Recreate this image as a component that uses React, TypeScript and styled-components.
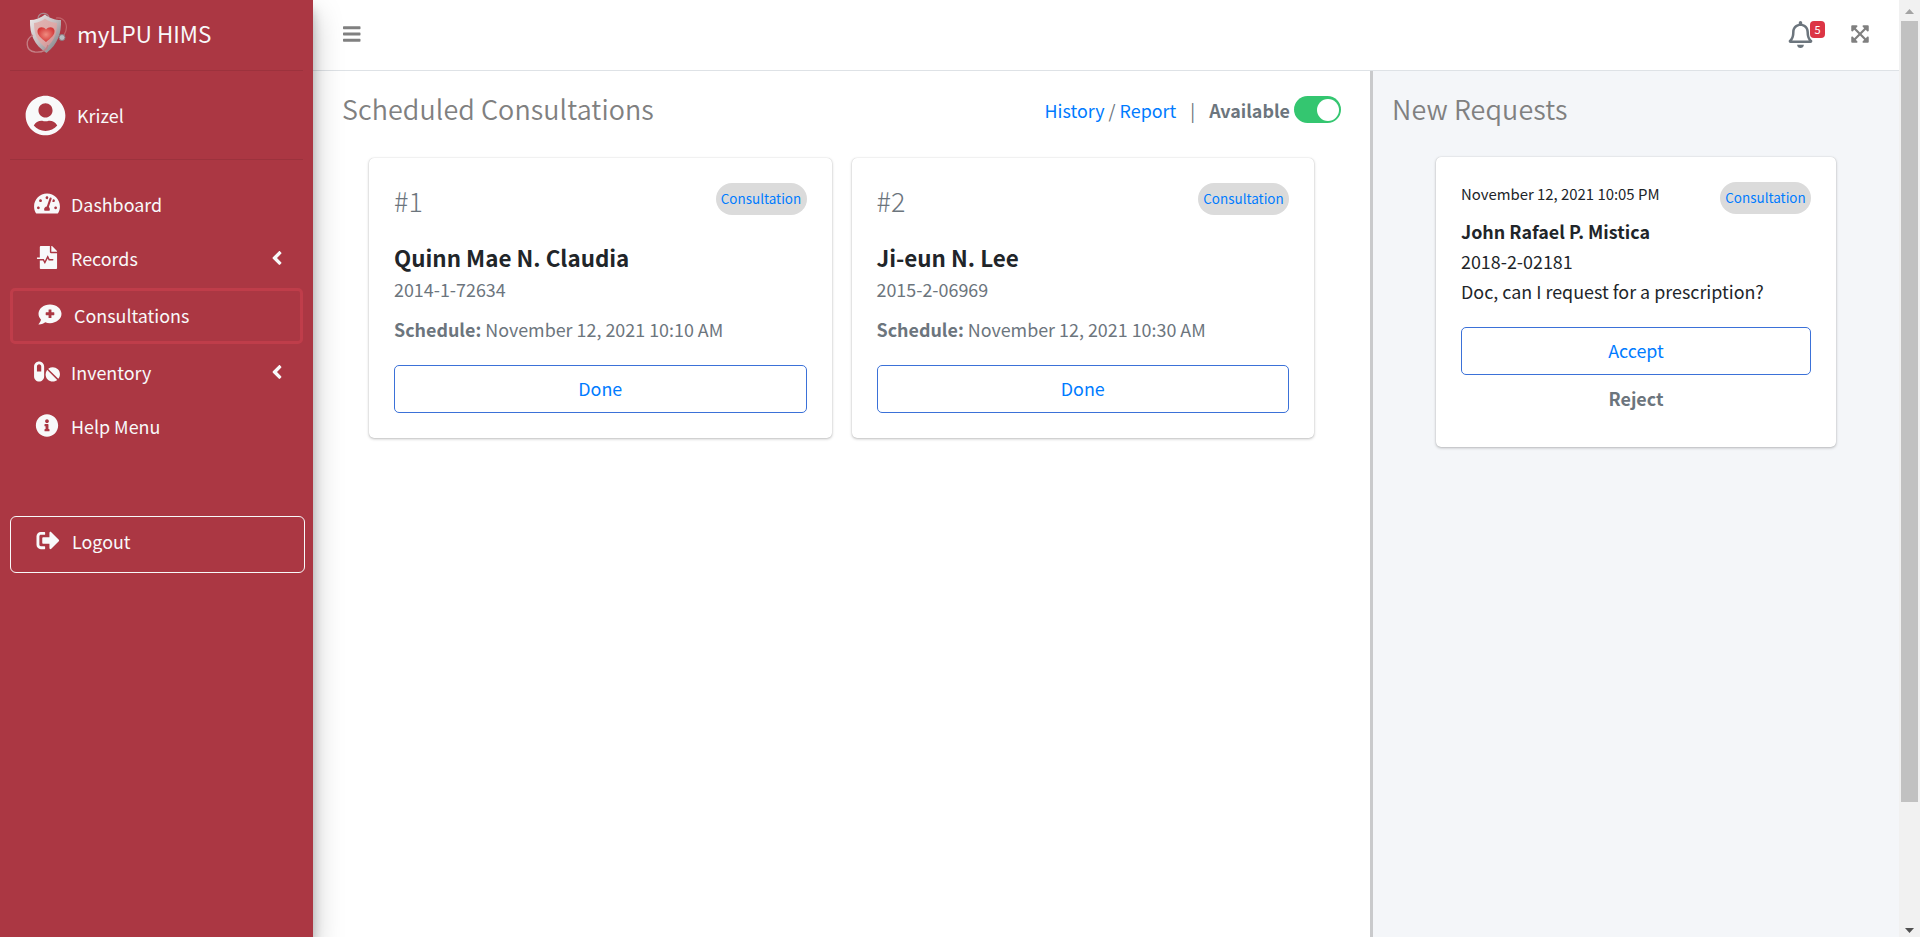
import React from "react";
import styled, { createGlobalStyle, css } from "styled-components";
import type { IconType } from "react-icons";
import {
  FaAngleLeft,
  FaBars,
  FaCommentMedical,
  FaExpandArrowsAlt,
  FaFileMedicalAlt,
  FaInfoCircle,
  FaPills,
  FaRegBell,
  FaSignOutAlt,
  FaTachometerAlt,
  FaUserCircle,
} from "react-icons/fa";

const GlobalStyle = createGlobalStyle`
  *, *::before, *::after { box-sizing: border-box; }
  body {
    margin: 0;
    overflow: hidden;
    background: #fff;
    color: #212529;
    font-family: "Noto Sans CJK SC", "Noto Sans", sans-serif;
    font-size: 17.9px;
    line-height: 30px;
  }
  h1, h2, h3, p { margin: 0; font-weight: 400; }
  a { color: #007bff; text-decoration: none; }
`;

const Page = styled.div`
  display: flex;
  width: 1920px;
  height: 937px;
`;

/* ---------- sidebar ---------- */

const Sidebar = styled.aside`
  position: relative;
  z-index: 2;
  flex: 0 0 313px;
  min-width: 0;
  padding: 0 10px;
  background: #ab3743;
  color: #f8f9fa;
  box-shadow: 0 14px 28px rgba(0, 0, 0, 0.25), 0 10px 10px rgba(0, 0, 0, 0.22);
`;

const Brand = styled.div`
  display: flex;
  align-items: center;
  height: 71px;
  padding: 0 0 4px 15px;
  border-bottom: 1px solid #9c323d;
  font-size: 22.4px;
`;

const Logo = styled.svg`
  width: 43px;
  height: 43px;
  margin: 1px 9px 0 0;
`;

const UserPanel = styled.div`
  display: flex;
  align-items: center;
  height: 89px;
  padding: 0 0 0 15px;
  border-bottom: 1px solid #9c323d;

  svg { font-size: 41px; margin-right: 11px; }
`;

const Nav = styled.nav`
  display: flex;
  flex-direction: column;
  padding-top: 18px;
`;

const NavLink = styled.div<{ $variant?: "active" | "logout" }>`
  display: flex;
  align-items: center;
  height: 54px;
  padding: 0 21px 2px;

  ${(p) =>
    p.$variant === "active" &&
    css`
      height: 56px;
      width: 293px;
      margin: 2px 0;
      border: 3px solid #bf3d4a;
      border-radius: 5px;
    `}
  ${(p) =>
    p.$variant === "logout" &&
    css`
      height: 57px;
      width: 295px;
      margin-top: 62px;
      padding-bottom: 8px;
      border: 1px solid #f8f9fa;
      border-radius: 6px;
    `}
`;

const NavIcon = styled.span`
  display: flex;
  justify-content: center;
  width: 32px;
  margin-right: 8px;
  padding-bottom: 1px;
  font-size: 23px;

  svg { width: 26px; height: 23px; }
`;

const NavArrow = styled(FaAngleLeft)`
  margin: 0 -6px 0 auto;
  font-size: 22px;
`;

/* ---------- top bar ---------- */

const Content = styled.div`
  display: flex;
  flex-direction: column;
  flex: 0 0 1586px;
`;

const TopBar = styled.header`
  display: flex;
  align-items: center;
  flex: 0 0 71px;
  padding: 0 29px 2px 30px;
  border-bottom: 1px solid #dee2e6;
  color: #808080;
`;

const MenuIcon = styled(FaBars)`
  width: 17.5px;
  height: 20px;
  margin-right: auto;
`;

const Bell = styled.span`
  position: relative;
  display: flex;
  margin-right: 36px;
  color: #6c757d;
  font-size: 27px;
`;

const BellCount = styled.span`
  position: absolute;
  top: 0;
  left: 23px;
  width: 15px;
  height: 17px;
  border-radius: 4px;
  background: #dc3545;
  color: #fff;
  font-size: 11px;
  line-height: 17px;
  text-align: center;
`;

const ExpandIcon = styled(FaExpandArrowsAlt)`
  font-size: 20px;
`;

/* ---------- panels ---------- */

const Panels = styled.div`
  display: flex;
  flex: 1;
`;

const Scheduled = styled.main`
  flex: 0 0 1057px;
  padding: 20px 29px;
`;

const Requests = styled.section`
  flex: 1;
  padding: 20px 20px 20px 19px;
  border-left: 3px solid #c9cacc;
  background: #f4f6f9;
`;

const PanelHead = styled.div`
  display: flex;
  align-items: center;
  justify-content: space-between;
  height: 38px;
`;

const PanelTitle = styled.h1`
  color: #808080;
  font-size: 26.9px;
  font-weight: 350;
  letter-spacing: 0.1px;
  line-height: 36px;
  margin-bottom: 2px;
`;

const PanelTools = styled.div`
  display: flex;
  align-items: center;
  color: #6c757d;
`;

const Slash = styled.span`
  margin: 0 4px;
`;

const Pipe = styled.span`
  margin: 0 14px;
`;

const Toggle = styled.span`
  display: flex;
  align-items: center;
  justify-content: flex-end;
  width: 47px;
  height: 27px;
  margin: 0 0 1px 4px;
  padding: 0 2px;
  border-radius: 14px;
  background: #34c670;

  &::after {
    content: "";
    width: 22px;
    height: 22px;
    border-radius: 50%;
    background: #fff;
  }
`;

const CardRow = styled.div`
  display: flex;
  gap: 20px;
  margin: 29px 27px 0 27px;
`;

const Card = styled.article<{ $request?: boolean }>`
  flex: 1;
  padding: 25px;
  border-radius: 5px;
  background: #fff;
  box-shadow: 0 0 1px rgba(0, 0, 0, 0.2), 0 1px 3px rgba(0, 0, 0, 0.25);

  ${(p) =>
    p.$request &&
    css`
      width: 400px;
      margin: 28px 0 0 44px;
      padding-bottom: 34px;
    `}
`;

const CardHead = styled.div<{ $height: number }>`
  display: flex;
  justify-content: space-between;
  height: ${(p) => p.$height}px;
`;

const Queue = styled.h2`
  color: #6c757d;
  font-size: 26.9px;
  font-weight: 300;
  line-height: 35px;
`;

const Pill = styled.span`
  width: 91px;
  height: 32px;
  border-radius: 16px;
  background: #dbdbdb;
  color: #007bff;
  font-size: 13.45px;
  line-height: 31px;
  text-align: center;
`;

const PatientName = styled.h3`
  margin-top: 24px;
  font-size: 22.4px;
  font-weight: 700;
`;

const PatientId = styled.p`
  margin-top: 2px;
  color: #6c757d;
`;

const Schedule = styled.p`
  margin-top: 10px;
  color: #6c757d;
`;

const OutlineButton = styled.button`
  display: block;
  width: 100%;
  height: 48px;
  margin-top: 21px;
  padding: 0 0 3px;
  border: 1px solid #3b71d8;
  border-radius: 5px;
  background: #fff;
  color: #007bff;
  font: inherit;
`;

const RequestDate = styled.span`
  font-size: 14.9px;
  line-height: 24px;
`;

const RequesterName = styled.h3`
  font-size: inherit;
  font-weight: 700;
`;

const RejectButton = styled.button`
  display: block;
  width: 100%;
  margin-top: 8px;
  padding: 0;
  border: 0;
  background: none;
  color: #6c757d;
  font: inherit;
  font-weight: 700;
`;

/* ---------- scrollbar ---------- */

const Scrollbar = styled.div`
  display: flex;
  flex-direction: column;
  align-items: center;
  flex: 0 0 21px;
  background: #f1f1f1;
`;

const ScrollArrow = styled.svg`
  flex: none;
  width: 21px;
  height: 21px;
`;

const Thumb = styled.div`
  width: 17px;
  height: 781px;
  margin-bottom: auto;
  background: #c1c1c1;
`;

interface NavEntry {
  label: string;
  icon: IconType;
  nested?: boolean;
  variant?: "active" | "logout";
}

const entries: NavEntry[] = [
  { label: "Dashboard", icon: FaTachometerAlt },
  { label: "Records", icon: FaFileMedicalAlt, nested: true },
  { label: "Consultations", icon: FaCommentMedical, variant: "active" },
  { label: "Inventory", icon: FaPills, nested: true },
  { label: "Help Menu", icon: FaInfoCircle },
  { label: "Logout", icon: FaSignOutAlt, variant: "logout" },
];

const consultations = [
  { queue: "#1", name: "Quinn Mae N. Claudia", id: "2014-1-72634", when: "November 12, 2021 10:10 AM" },
  { queue: "#2", name: "Ji-eun N. Lee", id: "2015-2-06969", when: "November 12, 2021 10:30 AM" },
];

const ShieldLogo = () => (
  <Logo viewBox="0 0 43 43" fill="none">
    <defs>
      <linearGradient id="rim" x1="0" y1="0" x2="1" y2="1">
        <stop offset="0" stopColor="#f1eded" />
        <stop offset="0.5" stopColor="#c3bcbf" />
        <stop offset="1" stopColor="#6f7378" />
      </linearGradient>
      <linearGradient id="face" x1="0" y1="0" x2="1" y2="1">
        <stop offset="0" stopColor="#e0b5b3" />
        <stop offset="0.55" stopColor="#dca9a8" />
        <stop offset="1" stopColor="#c98d90" />
      </linearGradient>
      <radialGradient id="heart">
        <stop offset="0" stopColor="#f08c80" />
        <stop offset="1" stopColor="#d43b3b" />
      </radialGradient>
    </defs>
    <path d="M13 6c1-6 9-6 11-1" stroke="#a9888d" strokeWidth="1.2" />
    <path d="M31 6c10-1 13 9 8 17" stroke="#c0646b" strokeWidth="1.2" />
    <path d="M20 2.500C16 6 10 8 5 8c-.5 14 4 25 16.500 33C33 32 36.500 21 36 8c-6 0-12-2-16-5.500z" fill="url(#rim)" />
    <path d="M20 6.500C17 9 13 10.500 9 11c0 11 3 18 12 25 8-7 11-14 11-25-5-.5-9-2-12-4.500z" fill="url(#face)" />
    <path d="M21 30c-5-4-9-7-8.500-11.500.5-4 6-4.500 8.500-1 2.500-3.500 8-3 8.500 1C30 23 26 26 21 30z" fill="url(#heart)" />
    <path d="M8 23c-8 4-8 16 2 17 7 .5 12-2 13-7" stroke="#c47f85" strokeWidth="1.300" />
    <circle cx="37" cy="25.500" r="3" fill="#b9bcc1" stroke="#8d7880" />
  </Logo>
);

export default function App() {
  return (
    <>
      <GlobalStyle />
      <Page>
        <Sidebar>
          <Brand>
            <ShieldLogo />
            myLPU HIMS
          </Brand>
          <UserPanel>
            <FaUserCircle />
            Krizel
          </UserPanel>
          <Nav>
            {entries.map(({ label, icon: Icon, nested, variant }) => (
              <NavLink key={label} $variant={variant}>
                <NavIcon>
                  <Icon />
                </NavIcon>
                {label}
                {nested && <NavArrow />}
              </NavLink>
            ))}
          </Nav>
        </Sidebar>

        <Content>
          <TopBar>
            <MenuIcon />
            <Bell>
              <FaRegBell />
              <BellCount>5</BellCount>
            </Bell>
            <ExpandIcon />
          </TopBar>
          <Panels>
            <Scheduled>
              <PanelHead>
                <PanelTitle>Scheduled Consultations</PanelTitle>
                <PanelTools>
                  <a>History</a>
                  <Slash>/</Slash>
                  <a>Report</a>
                  <Pipe>|</Pipe>
                  <b>Available</b>
                  <Toggle />
                </PanelTools>
              </PanelHead>
              <CardRow>
                {consultations.map((c) => (
                  <Card key={c.id}>
                    <CardHead $height={35}>
                      <Queue>{c.queue}</Queue>
                      <Pill>Consultation</Pill>
                    </CardHead>
                    <PatientName>{c.name}</PatientName>
                    <PatientId>{c.id}</PatientId>
                    <Schedule>
                      <b>Schedule:</b> {c.when}
                    </Schedule>
                    <OutlineButton>Done</OutlineButton>
                  </Card>
                ))}
              </CardRow>
            </Scheduled>
            <Requests>
              <PanelHead>
                <PanelTitle>New Requests</PanelTitle>
              </PanelHead>
              <Card $request>
                <CardHead $height={34}>
                  <RequestDate>November 12, 2021 10:05 PM</RequestDate>
                  <Pill>Consultation</Pill>
                </CardHead>
                <RequesterName>John Rafael P. Mistica</RequesterName>
                <p>2018-2-02181</p>
                <p>Doc, can I request for a prescription?</p>
                <OutlineButton>Accept</OutlineButton>
                <RejectButton>Reject</RejectButton>
              </Card>
            </Requests>
          </Panels>
        </Content>

        <Scrollbar>
          <ScrollArrow viewBox="0 0 21 21">
            <path d="M6 14L10.500 9L15 14z" fill="#a3a3a3" />
          </ScrollArrow>
          <Thumb />
          <ScrollArrow viewBox="0 0 21 21">
            <path d="M6 12L10.500 17L15 12z" fill="#505050" />
          </ScrollArrow>
        </Scrollbar>
      </Page>
    </>
  );
}
